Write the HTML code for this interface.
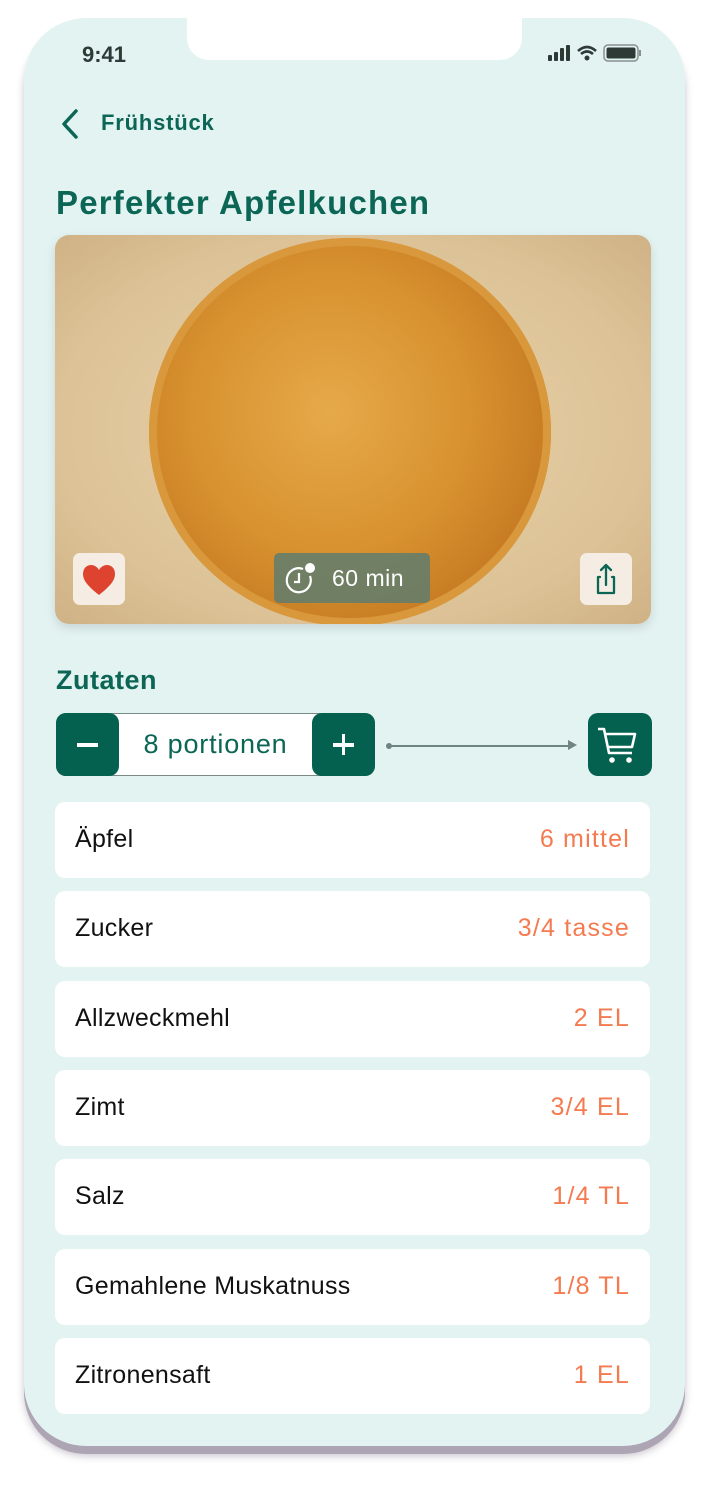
<!DOCTYPE html>
<html><head><meta charset="utf-8"><style>
*{margin:0;padding:0;box-sizing:border-box}
body{width:708px;height:1488px;background:#fff;position:relative;font-family:"Liberation Sans",sans-serif;overflow:hidden}
.phone{position:absolute;left:24px;top:18px;width:661px;height:1428px;background:#e3f3f2;border-radius:62px;box-shadow:0 8px 0 #ada4b4,0 10px 8px rgba(120,110,130,.4);overflow:hidden}
.notch{position:absolute;left:163px;top:0;width:335px;height:42px;background:#fff;border-radius:0 0 22px 22px}
.abs{position:absolute}
.time{left:58px;top:24px;font-size:22px;color:#2e3a36;font-weight:bold}
.green{color:#0c6656;font-weight:bold}
.img{left:31px;top:217px;width:596px;height:389px;border-radius:14px;overflow:hidden;background:radial-gradient(ellipse at 50% 50%,#e9d3ab,#dcc296 70%,#cfb286);box-shadow:0 4px 10px rgba(0,0,0,.12)}
.pie{position:absolute;left:94px;top:3px;width:402px;height:388px;border-radius:50%;background:radial-gradient(circle at 45% 45%,#e6a94a,#d8922f 45%,#c57922 75%,#b96a1c 90%,#a65d1e);box-shadow:0 0 0 8px #d9983c inset}
.btn{position:absolute;width:52px;height:52px;border-radius:7px;background:#f5ede3}
.row{position:absolute;left:31px;width:595px;height:76px;background:#fff;border-radius:10px;font-size:25px}
.row span{position:absolute;top:23px}
.row .l{left:20px;color:#111;letter-spacing:.3px}
.row .r{right:20px;color:#f47a50;letter-spacing:1.2px}
</style></head><body>
<div class="phone">
<div class="notch"></div>
<div class="abs time">9:41</div>
<svg class="abs" style="left:524px;top:25px" width="110" height="22" viewBox="0 0 110 22">
<rect x="0" y="12" width="4" height="6" rx="1" fill="#2e3a36"/><rect x="6" y="9" width="4" height="9" rx="1" fill="#2e3a36"/><rect x="12" y="5" width="4" height="13" rx="1" fill="#2e3a36"/><rect x="18" y="2" width="4" height="16" rx="1" fill="#2e3a36"/>
<path d="M30 8 Q39 0 48 8 M33 11 Q39 6 45 11" stroke="#2e3a36" stroke-width="2.6" fill="none"/><circle cx="39" cy="15" r="2.5" fill="#2e3a36"/>
<rect x="56" y="2" width="34" height="16" rx="4" fill="none" stroke="#8a908e" stroke-width="1.5"/><rect x="58.5" y="4.5" width="29" height="11" rx="2" fill="#2e3a36"/><rect x="91" y="7" width="2" height="6" fill="#8a908e"/>
</svg>
<svg class="abs" style="left:34px;top:90px" width="24" height="32"><path d="M18 3 L6 16 L18 29" stroke="#0c6656" stroke-width="3.5" fill="none" stroke-linecap="round" stroke-linejoin="round"/></svg>
<div class="abs green" style="left:77px;top:92px;font-size:22px;letter-spacing:.8px">Frühstück</div>
<div class="abs green" style="left:32px;top:166px;font-size:33px;letter-spacing:1.2px">Perfekter Apfelkuchen</div>
<div class="abs img"><div class="pie"></div>
<div class="btn" style="left:18px;top:318px"><svg width="52" height="52"><path d="M26 42 C16 34 10 28 10 21 C10 15 14 12 18 12 C22 12 25 15 26 17 C27 15 30 12 34 12 C38 12 42 15 42 21 C42 28 36 34 26 42Z" fill="#de4330"/></svg></div>
<div class="btn" style="left:525px;top:318px"><svg width="52" height="52"><path d="M20 24 H18 V40 H34 V24 H32 M26 32 V12 M21 17 L26 12 L31 17" stroke="#0c6656" stroke-width="2.3" fill="none" stroke-linecap="round" stroke-linejoin="round"/></svg></div>
<div style="position:absolute;left:219px;top:318px;width:156px;height:50px;border-radius:5px;background:rgba(95,125,110,.85);color:#fff;font-size:23px;letter-spacing:.5px">
<svg style="position:absolute;left:9px;top:8px" width="36" height="36"><path d="M27 15 A12 12 0 1 1 20 8" stroke="#fff" stroke-width="2.2" fill="none"/><path d="M16 12 V21 H11" stroke="#fff" stroke-width="2.2" fill="none"/><circle cx="27" cy="7" r="5" fill="#fff"/></svg>
<span style="position:absolute;left:58px;top:12px">60 min</span></div>
</div>
<div class="abs green" style="left:32px;top:647px;font-size:27px;letter-spacing:.5px">Zutaten</div>
<div class="abs" style="left:32px;top:695px;width:319px;height:63px;background:#fff;border-radius:10px;border:1px solid #7b8a86"></div>
<div class="abs" style="left:32px;top:695px;width:63px;height:63px;background:#05614f;border-radius:10px"><div style="position:absolute;left:21px;top:30px;width:21px;height:3.5px;background:#fff"></div></div>
<div class="abs" style="left:288px;top:695px;width:63px;height:63px;background:#05614f;border-radius:10px"><div style="position:absolute;left:21px;top:30px;width:21px;height:3.5px;background:#fff"></div><div style="position:absolute;left:29.7px;top:21px;width:3.5px;height:21px;background:#fff"></div></div>
<div class="abs" style="left:95px;top:711px;width:193px;text-align:center;font-size:27px;color:#0c6656;letter-spacing:.8px">8 portionen</div>
<div class="abs" style="left:362px;top:725px;width:6px;height:6px;border-radius:50%;background:#6f8582"></div>
<div class="abs" style="left:365px;top:727px;width:180px;height:1.5px;background:#6f8582"></div>
<svg class="abs" style="left:544px;top:722px" width="10" height="10"><path d="M0 0 L9 5 L0 10Z" fill="#6f8582"/></svg>
<div class="abs" style="left:564px;top:695px;width:64px;height:63px;background:#05614f;border-radius:10px">
<svg width="64" height="63"><path d="M10 16 H16 L21 40 H44 M17 21 H47 L44 34 H20" stroke="#fff" stroke-width="2.6" fill="none" stroke-linejoin="round"/><circle cx="24" cy="47" r="2.8" fill="#fff"/><circle cx="41" cy="47" r="2.8" fill="#fff"/></svg></div>
<div class="row" style="top:784px"><span class="l">Äpfel</span><span class="r">6 mittel</span></div>
<div class="row" style="top:873px"><span class="l">Zucker</span><span class="r">3/4 tasse</span></div>
<div class="row" style="top:963px"><span class="l">Allzweckmehl</span><span class="r">2 EL</span></div>
<div class="row" style="top:1052px"><span class="l">Zimt</span><span class="r">3/4 EL</span></div>
<div class="row" style="top:1141px"><span class="l">Salz</span><span class="r">1/4 TL</span></div>
<div class="row" style="top:1231px"><span class="l">Gemahlene Muskatnuss</span><span class="r">1/8 TL</span></div>
<div class="row" style="top:1320px"><span class="l">Zitronensaft</span><span class="r">1 EL</span></div>
</div>
</body></html>
